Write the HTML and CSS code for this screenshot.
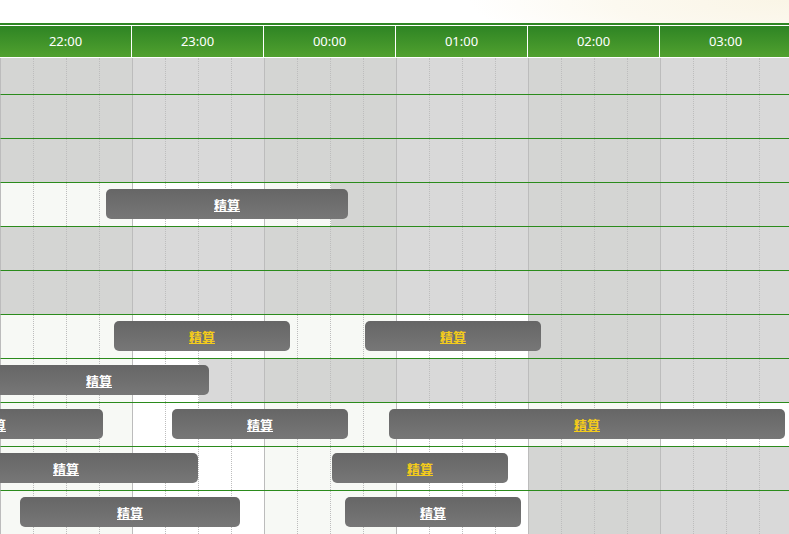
FILE: index.html
```html
<!DOCTYPE html>
<html lang="ja">
<head>
  <meta charset="UTF-8">
  <title>予約表</title>
  <link rel="stylesheet" href="styles.css">
</head>
<body>

  <div class="topo"></div>

  <div class="cabecalho">
    <div class="hora">22:00</div>
    <div class="hora">23:00</div>
    <div class="hora">00:00</div>
    <div class="hora">01:00</div>
    <div class="hora">02:00</div>
    <div class="hora">03:00</div>
  </div>

  <div class="grade">
    <div class="linha primeira" data-livre="0"></div>
    <div class="linha" data-livre="0"></div>
    <div class="linha" data-livre="0"></div>
    <div class="linha" data-livre="10">
      <a class="barra" style="left:105px;width:242px" href="#">精算</a>
    </div>
    <div class="linha" data-livre="0"></div>
    <div class="linha" data-livre="0"></div>
    <div class="linha" data-livre="16">
      <a class="barra amarelo" style="left:113px;width:176px" href="#">精算</a>
      <a class="barra amarelo" style="left:364px;width:176px" href="#">精算</a>
    </div>
    <div class="linha" data-livre="6">
      <a class="barra" style="left:-12px;width:220px" href="#">精算</a>
    </div>
    <div class="linha" data-livre="24">
      <a class="barra" style="left:-118px;width:220px" href="#">精算</a>
      <a class="barra" style="left:171px;width:176px" href="#">精算</a>
      <a class="barra amarelo" style="left:388px;width:396px" href="#">精算</a>
    </div>
    <div class="linha" data-livre="16">
      <a class="barra" style="left:-67px;width:264px" href="#">精算</a>
      <a class="barra amarelo" style="left:331px;width:176px" href="#">精算</a>
    </div>
    <div class="linha" data-livre="16">
      <a class="barra" style="left:19px;width:220px" href="#">精算</a>
      <a class="barra" style="left:344px;width:176px" href="#">精算</a>
    </div>
  </div>

  <script src="script.js"></script>

</body>
</html>
```

FILE: styles.css
```css
html, body {
  margin: 0;
  height: 100%;
  overflow: hidden;
}
body {
  font-family: "Noto Sans", "Noto Sans CJK JP", sans-serif;
  background: #fff;
  width: 789px;
}
.topo {
  height: 23px;
  background: radial-gradient(ellipse 320px 60px at 100% 0%, #faf5e6 0%, #fcf9f0 55%, #ffffff 100%);
}
.cabecalho {
  display: flex;
  border-top: 2px solid #2f8624;
  overflow: hidden;
  white-space: nowrap;
}
.hora {
  flex: 0 0 131px;
  height: 31px;
  line-height: 31px;
  border-top: 1px solid #fff;
  border-bottom: 1px solid #fff;
  border-right: 1px solid #fff;
  background: linear-gradient(#2e8424, #51a12f);
  color: #fff;
  font-size: 13px;
  text-align: center;
}
.grade {
  overflow: hidden;
}
.linha {
  position: relative;
  height: 43px;
  display: flex;
  border-left: 1px solid #bcbcbc;
  border-bottom: 1px solid #2b8b1c;
}
.linha.primeira {
  height: 36px;
}
/* quarto de hora */
.q {
  flex: 0 0 32px;
  border-right: 1px dotted #bdbdbd;
  background: #d4d5d3;
}
.q.par {
  background: #d9d9d9;
}
.q.livre {
  background: #f7f9f5;
}
.q.par.livre {
  background: #ffffff;
}
.q.fim {
  border-right: 1px solid #bcbcbc;
}
.barra {
  position: absolute;
  top: 6px;
  height: 30px;
  display: flex;
  align-items: center;
  justify-content: center;
  border-radius: 5px;
  background: linear-gradient(#666666, #777777);
  color: #fff;
  font-family: "Noto Sans CJK JP", sans-serif;
  font-size: 13px;
  font-weight: bold;
  text-decoration: underline;
}
.barra.amarelo {
  color: #f4cc1a;
}
```

FILE: script.js
```js
// monta as 24 colunas de 15 minutos de cada linha
const linhas = document.querySelectorAll('.linha');

linhas.forEach(function (linha) {
  const livre = parseInt(linha.dataset.livre, 10);
  const primeiraBarra = linha.firstChild;

  for (let i = 0; i < 24; i++) {
    const q = document.createElement('div');
    q.className = 'q';
    if (Math.floor(i / 4) % 2 === 1) q.classList.add('par');
    if (i < livre) q.classList.add('livre');
    if (i % 4 === 3) q.classList.add('fim');
    linha.insertBefore(q, primeiraBarra);
  }
});
```
